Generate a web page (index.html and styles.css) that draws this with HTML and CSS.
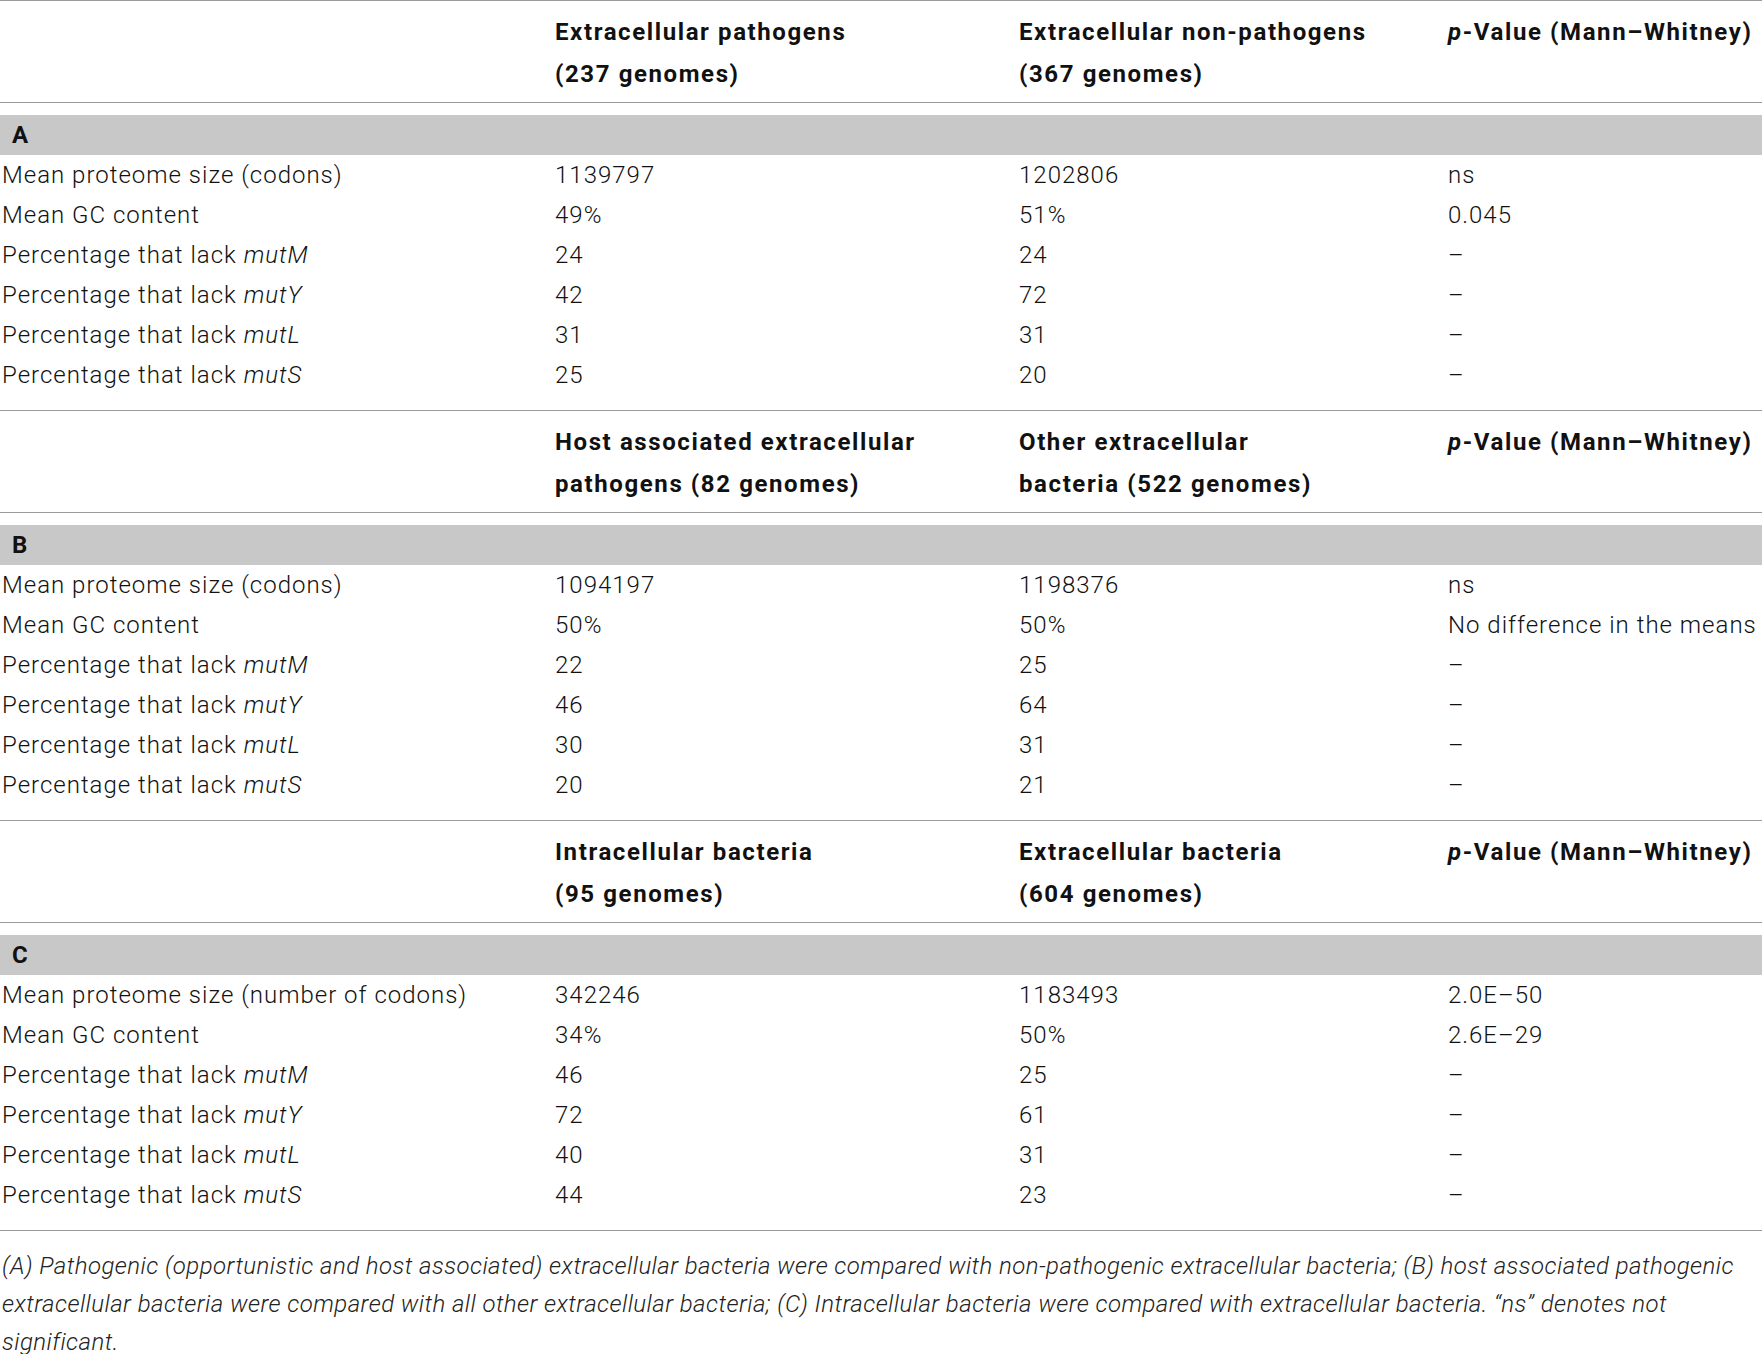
FILE: index.html
```html
<!doctype html>
<html>
  <head>
    <meta charset="utf-8">
    <title>Table 2</title>
    <link rel="stylesheet" href="styles.css">
  </head>
  <body>
    <table class="tbl">
      <colgroup>
        <col class="c1"><col class="c2"><col class="c3"><col class="c4">
      </colgroup>

      <tr class="head">
        <td></td>
        <td>Extracellular pathogens<br>(237 genomes)</td>
        <td>Extracellular non-pathogens<br>(367 genomes)</td>
        <td><i>p</i>-Value (Mann–Whitney)</td>
      </tr>
      <tr class="gap"><td colspan="4"></td></tr>
      <tr class="band"><td colspan="4">A</td></tr>
      <tr><td>Mean proteome size (codons)</td><td>1139797</td><td>1202806</td><td>ns</td></tr>
      <tr><td>Mean GC content</td><td>49%</td><td>51%</td><td>0.045</td></tr>
      <tr><td>Percentage that lack <i>mutM</i></td><td>24</td><td>24</td><td>–</td></tr>
      <tr><td>Percentage that lack <i>mutY</i></td><td>42</td><td>72</td><td>–</td></tr>
      <tr><td>Percentage that lack <i>mutL</i></td><td>31</td><td>31</td><td>–</td></tr>
      <tr><td>Percentage that lack <i>mutS</i></td><td>25</td><td>20</td><td>–</td></tr>
      <tr class="end"><td colspan="4"></td></tr>

      <tr class="head">
        <td></td>
        <td>Host associated extracellular<br>pathogens (82 genomes)</td>
        <td>Other extracellular<br>bacteria (522 genomes)</td>
        <td><i>p</i>-Value (Mann–Whitney)</td>
      </tr>
      <tr class="gap"><td colspan="4"></td></tr>
      <tr class="band"><td colspan="4">B</td></tr>
      <tr><td>Mean proteome size (codons)</td><td>1094197</td><td>1198376</td><td>ns</td></tr>
      <tr><td>Mean GC content</td><td>50%</td><td>50%</td><td>No difference in the means</td></tr>
      <tr><td>Percentage that lack <i>mutM</i></td><td>22</td><td>25</td><td>–</td></tr>
      <tr><td>Percentage that lack <i>mutY</i></td><td>46</td><td>64</td><td>–</td></tr>
      <tr><td>Percentage that lack <i>mutL</i></td><td>30</td><td>31</td><td>–</td></tr>
      <tr><td>Percentage that lack <i>mutS</i></td><td>20</td><td>21</td><td>–</td></tr>
      <tr class="end"><td colspan="4"></td></tr>

      <tr class="head">
        <td></td>
        <td>Intracellular bacteria<br>(95 genomes)</td>
        <td>Extracellular bacteria<br>(604 genomes)</td>
        <td><i>p</i>-Value (Mann–Whitney)</td>
      </tr>
      <tr class="gap"><td colspan="4"></td></tr>
      <tr class="band"><td colspan="4">C</td></tr>
      <tr><td>Mean proteome size (number of codons)</td><td>342246</td><td>1183493</td><td>2.0E–50</td></tr>
      <tr><td>Mean GC content</td><td>34%</td><td>50%</td><td>2.6E–29</td></tr>
      <tr><td>Percentage that lack <i>mutM</i></td><td>46</td><td>25</td><td>–</td></tr>
      <tr><td>Percentage that lack <i>mutY</i></td><td>72</td><td>61</td><td>–</td></tr>
      <tr><td>Percentage that lack <i>mutL</i></td><td>40</td><td>31</td><td>–</td></tr>
      <tr><td>Percentage that lack <i>mutS</i></td><td>44</td><td>23</td><td>–</td></tr>
      <tr class="end last"><td colspan="4"></td></tr>
    </table>

    <p class="note">(A) Pathogenic (opportunistic and host associated) extracellular bacteria were compared with non-pathogenic extracellular bacteria; (B) host associated pathogenic extracellular bacteria were compared with all other extracellular bacteria; (C) Intracellular bacteria were compared with extracellular bacteria. “ns” denotes not significant.</p>
  </body>
</html>
```

FILE: styles.css
```css
html,
body {
  margin: 0;
  padding: 0;
  background: #fff;
}
body {
  font-family: Roboto, "Liberation Sans", sans-serif;
  font-weight: 300;
  font-size: 24px;
  letter-spacing: 1px;
  color: #111;
  overflow: hidden;
}
.tbl {
  border-collapse: separate;
  border-spacing: 0;
  table-layout: fixed;
  width: 1762px;
}
.c1 { width: 553px; }
.c2 { width: 464px; }
.c3 { width: 429px; }
.c4 { width: 316px; }

.tbl td {
  padding: 0 0 0 2px;
  height: 40px;
  line-height: 39px;
  white-space: nowrap;
  vertical-align: middle;
}
.tbl tr.head td {
  font-weight: 700;
  letter-spacing: 1.6px;
  line-height: 42px;
  height: auto;
  padding-top: 10px;
  padding-bottom: 7px;
  vertical-align: top;
  border-top: 1px solid #9a9a9a;
  border-bottom: 1px solid #9a9a9a;
}
.tbl tr.gap td {
  height: 12px;
  line-height: 0;
}
.tbl tr.band td {
  background: #c8c8c8;
  font-weight: 700;
  padding-left: 12px;
}
.tbl tr.end td {
  height: 15px;
  line-height: 0;
}
.tbl tr.last td {
  border-bottom: 1px solid #9a9a9a;
}
.note {
  margin: 0;
  padding: 16px 2px 0 2px;
  font-style: italic;
  letter-spacing: 0.45px;
  line-height: 38px;
  color: #222;
}
```
